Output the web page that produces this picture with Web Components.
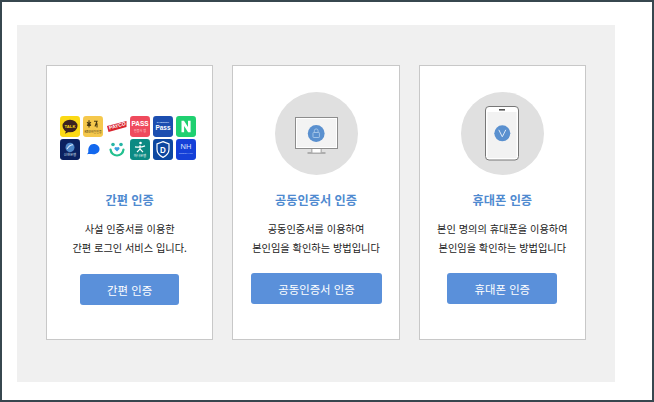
<!DOCTYPE html>
<html lang="ko"><head><meta charset="utf-8"><title>인증</title>
<style>html,body{margin:0;padding:0;background:#fff}body{font-family:"Noto Sans CJK KR","Noto Sans",sans-serif}</style>
</head><body>
<auth-page>
  <auth-card title-text="간편 인증" line1="사설 인증서를 이용한" line2="간편 로그인 서비스 입니다." btn="간편 인증" btn-w="99" btn-h="31" btn-top="17"><logo-grid></logo-grid></auth-card>
  <auth-card title-text="공동인증서 인증" line1="공동인증서를 이용하여" line2="본인임을 확인하는 방법입니다" btn="공동인증서 인증" btn-w="131" btn-h="31" btn-top="16" btn-left="1"><device-icon kind="pc"></device-icon></auth-card>
  <auth-card title-text="휴대폰 인증" line1="본인 명의의 휴대폰을 이용하여" line2="본인임을 확인하는 방법입니다" btn="휴대폰 인증" btn-w="110" btn-h="31" btn-top="16"><device-icon kind="phone"></device-icon></auth-card>
</auth-page>
<script>
class AuthPage extends HTMLElement{constructor(){super();this.attachShadow({mode:'open'}).innerHTML=`<style>
:host{display:block;box-sizing:border-box;width:654px;height:402px;border:2px solid #37474f;padding:23px 0 0 15px;background:#fff}
.panel{box-sizing:border-box;width:598px;height:357px;background:#f0f0f0;padding:40px 29px 0 29px;display:flex;gap:19px}
</style><div class="panel"><slot></slot></div>`}}
class AuthCard extends HTMLElement{constructor(){super();this.attachShadow({mode:'open'})}
connectedCallback(){const a=n=>this.getAttribute(n);this.shadowRoot.innerHTML=`<style>
:host{display:flex;flex-direction:column;align-items:center;box-sizing:border-box;width:168px;height:275px;background:#fff;border:1px solid #c8c8c8}
.art{height:125px;width:100%;display:flex;justify-content:center;align-items:flex-start}
h3{margin:0;font-size:12.2px;line-height:18px;font-weight:700;color:#4f8ad0}
p{margin:10px 0 0;font-size:10.2px;line-height:19px;color:#222;text-align:center;white-space:nowrap}
button{all:unset;box-sizing:border-box;display:flex;align-items:center;justify-content:center;width:${a('btn-w')}px;height:${a('btn-h')}px;margin-top:${a('btn-top')}px;margin-left:${a('btn-left')||0}px;background:#5a90da;color:#fff;border-radius:3px;font-size:11.4px}
</style><div class="art"><slot></slot></div><h3>${a('title-text')}</h3><p>${a('line1')}<br>${a('line2')}</p><button>${a('btn')}</button>`}}
class LogoGrid extends HTMLElement{constructor(){super();
const t=(bg,svg)=>`<svg width="20" height="21" viewBox="0 0 20 20" preserveAspectRatio="none"><rect width="20" height="20" rx="3" fill="${bg}"/>${svg}</svg>`;
const x=(s,y,size,fill,w='700')=>`<text x="10" y="${y}" font-size="${size}" font-weight="${w}" fill="${fill}" text-anchor="middle" font-family="Liberation Sans,sans-serif">${s}</text>`;
const k=(s,y,size,fill)=>`<text x="10" y="${y}" font-size="${size}" fill="${fill}" text-anchor="middle" font-family="Noto Sans CJK KR,sans-serif">${s}</text>`;
const tiles=[
t('#fbd915',`<ellipse cx="10" cy="9.5" rx="7.5" ry="6" fill="#3c2220"/><path d="M6 14l-1 3 4-2z" fill="#3c2220"/>`+x('TALK',11,4.2,'#fbd915')),
t('#f5c84c',`<path d="M6 4v7M4 6l4 3M8 6l-4 3M11 5h3l-2 5M14 7v4" stroke="#4a3a12" stroke-width="1.1" fill="none"/>`+k('KB모바일인증',16,2.9,'#4a3a12')),
`<svg width="20" height="21" viewBox="0 0 20 20"><path d="M0 9.5L19.5 4.5V10.5L1.5 15.500z" fill="#d9252f"/><text transform="translate(2.600 13) rotate(-15)" font-size="5" font-weight="700" fill="#fff" font-family="Liberation Sans,sans-serif">PAYCO</text></svg>`,
t('#ef4a5d',x('PASS',9.500,6.500,'#fff')+k('인증서 앱',15,3,'#ffd7dc')),
t('#1c4eb0',x('SAMSUNG',6.500,2.400,'#cfe0ff')+x('Pass',13.500,6.400,'#fff')),
t('#1fd070',`<path d="M5.500 15.500V4.500h2.500l4 6v-6h2.600v11h-2.500l-4-6v6z" fill="#fff"/>`),
t('#0b2160',`<circle cx="10" cy="8" r="4.500" fill="#4d86c8"/><path d="M7 9.500c2-3 4-4 6-4" stroke="#dbeafc" fill="none"/>`+k('신한은행',16,3.400,'#dbe5f5')),
`<svg width="20" height="21" viewBox="0 0 20 20"><path d="M10.500 4.500c4 0 6 2.700 6 5.300s-2.500 5-6 5c-2 0-4-.4-6.500 0 1-1 1.500-1.800 1.300-3C5 8 7 4.500 10.500 4.500z" fill="#1368ee"/></svg>`,
`<svg width="20" height="21" viewBox="0 0 20 20"><circle cx="6" cy="5" r="1.800" fill="#27b5a5"/><circle cx="14" cy="5" r="1.800" fill="#27b5a5"/><path d="M3.500 10c.5 4 3.500 6 6.500 6s6-2 6.500-6" stroke="#22c08f" stroke-width="2.200" fill="none" stroke-linecap="round"/><path d="M10 12l-2.500-2.500a1.500 1.500 0 0 1 2.500-1.500 1.500 1.500 0 0 1 2.500 1.500z" fill="#3a9fe0"/></svg>`,
t('#0b8a83',`<circle cx="10.500" cy="3.800" r="1.300" fill="#fff"/><path d="M5 7.500c3 .5 7 .3 10-1M10 6v3.500l-3 3M10 9.500l3 3" stroke="#fff" stroke-width="1.200" fill="none"/>`+k('하나은행',17.500,3.400,'#fff')),
t('#0d47a1',`<path d="M10 2.500l6 2.200v5.300c0 3.500-3 6-6 7.500-3-1.500-6-4-6-7.500V4.700z" fill="none" stroke="#fff" stroke-width="1.200"/>`+x('D',13,8,'#fff')),
t('#1540d8',x('NH',10,7.500,'#dbe6ff','400')+x('NONGHYUP',14.500,2.400,'#bcd0ff','400'))
];
this.attachShadow({mode:'open'}).innerHTML=`<style>:host{display:grid;grid-template-columns:repeat(6,20px);column-gap:3.300px;row-gap:2px;margin:50px 3px 0 0}svg{display:block}</style>`+tiles.join('')}}
class DeviceIcon extends HTMLElement{constructor(){super();this.attachShadow({mode:'open'})}
connectedCallback(){const pc=this.getAttribute('kind')==='pc';
const g=pc?`<rect x="20.500" y="25.500" width="42" height="31" fill="#f3f3f3" stroke="#8d8d8d"/><rect x="21.500" y="26.500" width="40" height="29" fill="#f3f3f3" stroke="#fff"/>
<circle cx="41.200" cy="41.500" r="8.400" fill="#5a90cf"/><rect x="38" y="40.500" width="6.400" height="5" rx=".6" fill="none" stroke="#a9c8ea" stroke-width=".9"/><path d="M39.300 40.500v-1.700a1.900 1.900 0 0 1 3.800 0v1.700" fill="none" stroke="#a9c8ea" stroke-width=".9"/>
<path d="M37 57v3M46 57v3" stroke="#8d8d8d"/><path d="M32.500 61h18" stroke="#8d8d8d" stroke-width="1.200"/><rect x="37.500" y="57" width="8" height="3.500" fill="#fff"/>`
:`<rect x="24.500" y="14.500" width="33" height="53.500" rx="3.500" fill="#fff" stroke="#777" stroke-width="1"/><rect x="26.500" y="20" width="29" height="46" fill="#f2f2f2"/><rect x="38" y="17" width="6" height="1.600" fill="#555"/>
<circle cx="41.300" cy="41.300" r="8" fill="#5a90cf"/><path d="M37.800 37.800l3.500 7 3.500-7" fill="none" stroke="#dce9f7" stroke-width="1"/>`;
this.shadowRoot.innerHTML=`<style>:host{display:block;width:83px;height:83px;margin-top:26px;margin-left:${pc?1:0}px}svg{display:block}</style><svg width="83" height="83" viewBox="0 0 83 83"><circle cx="41.500" cy="41.500" r="41.500" fill="#e0e0e0"/>${g}</svg>`}}
customElements.define('auth-page',AuthPage);customElements.define('auth-card',AuthCard);customElements.define('logo-grid',LogoGrid);customElements.define('device-icon',DeviceIcon);
</script></body></html>
